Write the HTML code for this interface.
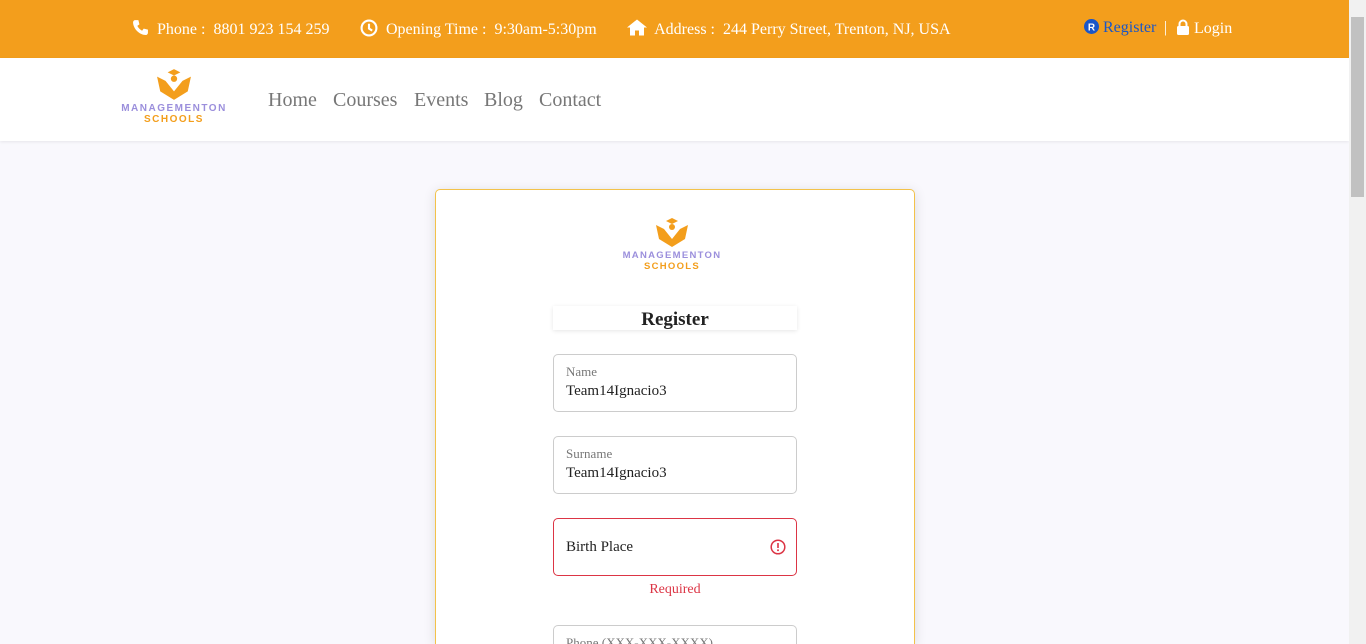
<!DOCTYPE html>
<html style="overflow:hidden;height:644px"><head><style>
*{box-sizing:border-box;margin:0;padding:0}
body{width:1366px;height:644px;overflow:hidden;background:#f9f8fd;font-family:"Liberation Serif",serif;position:relative}
.top{position:absolute;left:0;top:0;width:1349px;height:58px;background:#f39e1c;color:#fff;font-size:16px}
.top span{position:absolute;top:19px;white-space:nowrap}
.nav{position:absolute;left:0;top:58px;width:1349px;height:83px;background:#fff;box-shadow:0 1px 3px rgba(0,0,0,.08)}
.nav a{position:absolute;top:31px;font-size:20px;color:#777}
.sb{position:absolute;right:0;top:0;width:17px;height:644px;background:#f1f1f1}
.sb div{position:absolute;left:2px;top:17px;width:13px;height:180px;background:#c1c1c1}
.card{position:absolute;left:435px;top:189px;width:480px;height:455px;background:#fff;border:1px solid #f3c24a;border-bottom:none;border-radius:5px 5px 0 0;box-shadow:0 2px 12px rgba(0,0,0,.12)}
.fld{position:absolute;left:553px;width:244px;height:58px;border:1px solid #ccc;border-radius:5px;background:#fff}
.fld .l{position:absolute;left:12px;top:9px;font-size:13px;color:#777}
.fld .v{position:absolute;left:12px;top:28px;font-size:15px;color:#222}
.logo{position:absolute;text-align:center;font-family:"Liberation Sans",sans-serif;font-weight:bold;font-size:10px;letter-spacing:1.5px;line-height:11px}
</style></head><body>
<div class="top">
<span style="left:132px"><svg width="17" height="17" viewBox="0 0 16 16" style="vertical-align:-2px"><path d="M3 1l3 0 1 4-2 1.5c1 2 2.5 3.5 4.5 4.5L11 9l4 1v3c0 1-1 2-2 2C7 15 1 9 1 3c0-1 1-2 2-2z" fill="#fff"/></svg>&nbsp; Phone :&nbsp; 8801 923 154 259</span>
<span style="left:360px"><svg width="18" height="18" viewBox="0 0 17 17" style="vertical-align:-3px"><circle cx="8.5" cy="8.5" r="7" fill="none" stroke="#fff" stroke-width="2"/><path d="M8.5 4.5v4.5l3 2" fill="none" stroke="#fff" stroke-width="2"/></svg>&nbsp; Opening Time :&nbsp; 9:30am-5:30pm</span>
<span style="left:627px"><svg width="20" height="17" viewBox="0 0 20 16" style="vertical-align:-2px"><path d="M10 0L0 8h3v8h5v-5h4v5h5V8h3z" fill="#fff"/></svg>&nbsp; Address :&nbsp; 244 Perry Street, Trenton, NJ, USA</span>
<span style="left:1084px;color:#1a56c8"><svg width="15" height="15" viewBox="0 0 15 15" style="vertical-align:-2px"><circle cx="7.5" cy="7.5" r="7.5" fill="#1a56c8"/><text x="7.5" y="11.5" font-size="10" font-family="Liberation Sans" font-weight="bold" fill="#fff" text-anchor="middle">R</text></svg> Register</span>
<span style="left:1164px">|</span>
<span style="left:1176px"><svg width="14" height="16" viewBox="0 0 14 16" style="vertical-align:-2px"><path d="M3.5 7V5a3.5 3.5 0 017 0v2" fill="none" stroke="#fff" stroke-width="2"/><rect x="1" y="7" width="12" height="9" rx="1.5" fill="#fff"/></svg> Login</span>
</div>
<div class="nav">
<div class="logo" style="left:118px;top:10px;width:112px">
<svg width="36" height="32" viewBox="0 0 34 30"><path d="M11 4l6-3 6 3-6 3z" fill="#f39e1c"/><path d="M1 8l8 4 8 10 8-10 8-4-3 14-13 8-13-8z" fill="#f39e1c"/><circle cx="17" cy="10" r="3" fill="#f39e1c"/></svg>
<div style="color:#9b8fdc">MANAGEMENTON</div><div style="color:#f39e1c">SCHOOLS</div></div>
<a style="left:268px">Home</a><a style="left:333px">Courses</a><a style="left:414px">Events</a><a style="left:484px">Blog</a><a style="left:539px">Contact</a>
</div>
<div class="card"></div>
<div class="logo" style="left:617px;top:217px;width:110px">
<svg width="34" height="30" viewBox="0 0 34 30"><path d="M11 4l6-3 6 3-6 3z" fill="#f39e1c"/><path d="M1 8l8 4 8 10 8-10 8-4-3 14-13 8-13-8z" fill="#f39e1c"/><circle cx="17" cy="10" r="3" fill="#f39e1c"/></svg>
<div style="color:#9b8fdc;font-size:9.5px;letter-spacing:1.3px">MANAGEMENTON</div><div style="color:#f39e1c;font-size:9.5px;letter-spacing:1.3px">SCHOOLS</div></div>
<div style="position:absolute;left:553px;top:306px;width:244px;height:24px;background:#fff;box-shadow:0 1px 4px rgba(0,0,0,.1);text-align:center;font-weight:bold;font-size:19px;color:#222;line-height:27px">Register</div>
<div class="fld" style="top:354px"><div class="l">Name</div><div class="v">Team14Ignacio3</div></div>
<div class="fld" style="top:436px"><div class="l">Surname</div><div class="v">Team14Ignacio3</div></div>
<div class="fld" style="top:518px;border-color:#dc3545"><div class="v" style="top:20px">Birth Place</div>
<svg style="position:absolute;right:10px;top:20px" width="16" height="16" viewBox="0 0 16 16"><circle cx="8" cy="8" r="6.8" fill="none" stroke="#dc3545" stroke-width="1.5"/><rect x="7.2" y="4" width="1.6" height="5" fill="#dc3545"/><circle cx="8" cy="11.3" r="1" fill="#dc3545"/></svg></div>
<div style="position:absolute;left:553px;top:582px;width:244px;text-align:center;font-size:14px;color:#dc3545">Required</div>
<div class="fld" style="top:625px;height:19px;border-bottom:none;border-radius:5px 5px 0 0;overflow:hidden"><div class="l">Phone (XXX-XXX-XXXX)</div></div>
<div class="sb"><div></div></div>
</body></html>
